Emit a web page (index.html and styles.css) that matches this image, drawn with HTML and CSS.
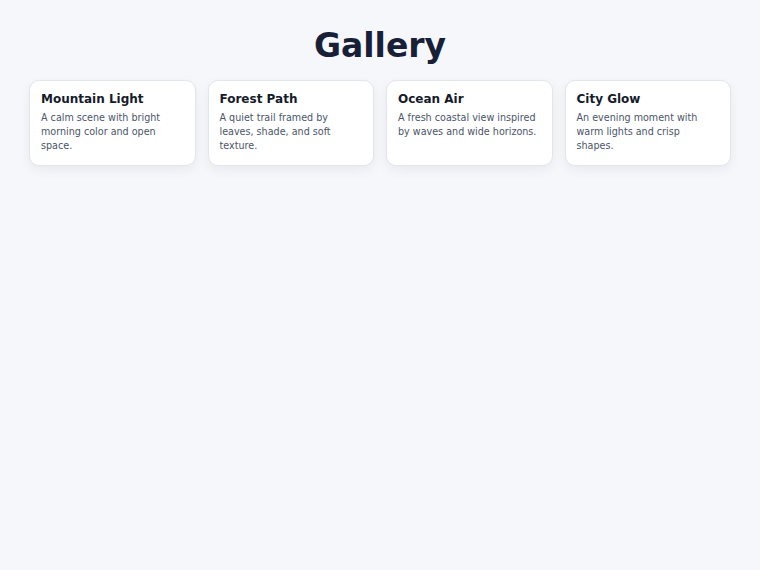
FILE: index.html
```html
<!DOCTYPE html>
<html lang="en">
<head>
<meta charset="utf-8">
<title>Gallery</title>
<link rel="stylesheet" href="styles.css">
</head>
<body>
  <main class="page">
    <h1 class="page-title">Gallery</h1>
    <section class="grid">
      <article class="card">
        <h2 class="card-title">Mountain Light</h2>
        <p class="card-text">A calm scene with bright morning color and open space.</p>
      </article>
      <article class="card">
        <h2 class="card-title">Forest Path</h2>
        <p class="card-text">A quiet trail framed by leaves, shade, and soft texture.</p>
      </article>
      <article class="card">
        <h2 class="card-title">Ocean Air</h2>
        <p class="card-text">A fresh coastal view inspired by waves and wide horizons.</p>
      </article>
      <article class="card">
        <h2 class="card-title">City Glow</h2>
        <p class="card-text">An evening moment with warm lights and crisp shapes.</p>
      </article>
    </section>
  </main>
</body>
</html>
```
FILE: styles.css
```css
html, body {
  margin: 0;
  padding: 0;
  background: #f5f7fb;
}

body {
  font-family: "DejaVu Sans", "Liberation Sans", sans-serif;
  color: #172036;
}

.page {
  padding: 26px 29px;
}

.page-title {
  margin: 0 0 14px;
  text-align: center;
  font-size: 33px;
  line-height: 40px;
  font-weight: 700;
  color: #172036;
}

.grid {
  display: grid;
  grid-template-columns: repeat(4, 1fr);
  gap: 12px;
}

.card {
  background: #ffffff;
  border: 1px solid #e1e5ec;
  border-radius: 10px;
  padding: 10px 11px 12px;
  box-shadow: 0 4px 12px rgba(15, 23, 42, 0.06);
}

.card-title {
  margin: 0 0 4px;
  font-size: 12px;
  line-height: 16px;
  font-weight: 700;
  color: #151b2b;
}

.card-text {
  margin: 0;
  font-size: 9.6px;
  line-height: 14px;
  color: #4b5568;
}
```
